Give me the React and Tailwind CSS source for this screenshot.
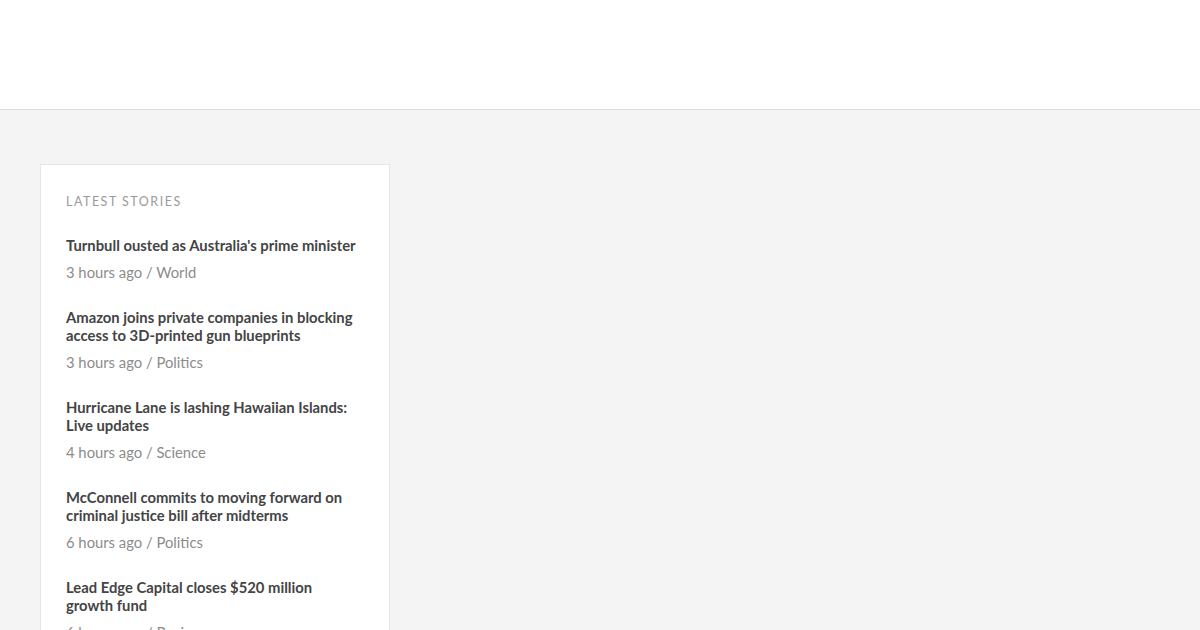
import React from "react";

const stories = [
  { title: "Turnbull ousted as Australia's prime minister", time: "3 hours ago", section: "World" },
  { title: "Amazon joins private companies in blocking access to 3D-printed gun blueprints", time: "3 hours ago", section: "Politics" },
  { title: "Hurricane Lane is lashing Hawaiian Islands: Live updates", time: "4 hours ago", section: "Science" },
  { title: "McConnell commits to moving forward on criminal justice bill after midterms", time: "6 hours ago", section: "Politics" },
  { title: "Lead Edge Capital closes $520 million growth fund", time: "6 hours ago", section: "Business" },
];

export default function App() {
  return (
    <div className="min-h-screen bg-[#f4f4f4] font-['Lato',sans-serif]">
      <header className="h-[110px] bg-white border-b border-[#dcdcdc]"></header>
      <main className="px-10 pt-[54px]">
        <div className="w-[350px] bg-white border border-[#e6e6e6] pl-[25px] pr-[31px] pt-[29px] pb-6">
          <h2 className="text-[12.5px] leading-4 tracking-[1.5px] uppercase text-[#9a9a9a] font-normal">
            Latest Stories
          </h2>
          <ul className="mt-[26px]">
            {stories.map((s) => (
              <li key={s.title} className="mb-[26px]">
                <a href="#" className="block text-[14.8px] leading-[18px] font-bold text-[#444]">
                  {s.title}
                </a>
                <p className="mt-2 text-[14.8px] leading-5 text-[#8c8c8c]">
                  {s.time} / {s.section}
                </p>
              </li>
            ))}
          </ul>
        </div>
      </main>
    </div>
  );
}
